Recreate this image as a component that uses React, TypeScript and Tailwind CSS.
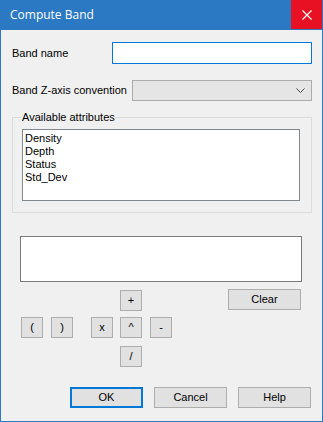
import type { ReactNode } from 'react'

function Btn({
  children,
  className = '',
  primary = false,
}: {
  children: ReactNode
  className?: string
  primary?: boolean
}) {
  return (
    <button
      type="button"
      className={`flex items-center justify-center bg-[#e1e1e1] text-[11px] leading-none text-black ${
        primary ? 'border-2 border-[#0078d7]' : 'border border-[#adadad]'
      } ${className}`}
    >
      {children}
    </button>
  )
}

function OpBtn({ children }: { children: ReactNode }) {
  return <Btn className="h-[21px] w-[22px] pb-[1px]">{children}</Btn>
}

export default function App() {
  const attrs = ['Density', 'Depth', 'Status', 'Std_Dev']

  return (
    <div className="flex h-[422px] w-[323px] flex-col bg-[#2b79c2] px-px pb-px font-['Liberation_Sans',Arial,sans-serif] text-[11px] text-black">
      {/* title bar */}
      <div className="-mx-px flex h-[30px] shrink-0 items-start justify-between">
        <span className="pl-[10px] pt-[7px] font-['Open_Sans',sans-serif] text-[12px] leading-[16px] text-white">
          Compute Band
        </span>
        <div className="mr-px flex h-[29px] w-[31px] items-center justify-center bg-[#e81123]">
          <svg width="10" height="10" viewBox="0 0 10 10">
            <path d="M0.5 0.5 L9.5 9.5 M9.5 0.5 L0.5 9.5" stroke="#fff" strokeWidth="1.2" />
          </svg>
        </div>
      </div>

      {/* body */}
      <div className="flex flex-1 flex-col bg-[#f0f0f0] pl-[11px]">
        <div className="mt-[12px] flex h-[22px] items-center">
          <span className="w-[100px] whitespace-nowrap">Band name</span>
          <input className="h-[22px] w-[200px] border border-[#0078d7] bg-white outline-none" />
        </div>

        <div className="mt-[16px] flex h-[21px] items-center">
          <span className="w-[120px] whitespace-nowrap">Band Z-axis convention</span>
          <div className="flex h-[21px] w-[180px] items-center justify-end border border-[#acacac] bg-[#e5e5e5] pr-[6px]">
            <svg width="9" height="5" viewBox="0 0 9 5">
              <path d="M0.5 0.5 L4.5 4.5 L8.5 0.5" stroke="#444" strokeWidth="1" fill="none" />
            </svg>
          </div>
        </div>

        {/* group box */}
        <div className="relative mt-[16px] h-[96px] w-[300px] border border-[#dcdcdc]">
          <span className="absolute left-[8px] top-[-8px] whitespace-nowrap bg-[#f0f0f0] px-px leading-[14px]">
            Available attributes
          </span>
          <div className="ml-[9px] mt-[11px] h-[72px] w-[278px] border border-[#828790] bg-white pl-[2px] pt-[2px]">
            {attrs.map((a) => (
              <div key={a} className="leading-[13px]">
                {a}
              </div>
            ))}
          </div>
        </div>

        {/* expression box */}
        <div className="ml-[8px] mt-[23px] h-[46px] w-[282px] border border-[#7a7a7a] bg-white" />

        {/* operators */}
        <div className="mt-[7px] flex h-[22px] items-start">
          <div className="ml-[108px] mt-px">
            <OpBtn>+</OpBtn>
          </div>
          <Btn className="ml-[86px] h-[21px] w-[73px]">Clear</Btn>
        </div>
        <div className="mt-[6px] flex h-[21px] items-start">
          <div className="ml-[9px] flex gap-[8px]">
            <OpBtn>(</OpBtn>
            <OpBtn>)</OpBtn>
          </div>
          <div className="ml-[18px] flex gap-[7px]">
            <OpBtn>x</OpBtn>
            <OpBtn>^</OpBtn>
            <div className="ml-px">
              <OpBtn>-</OpBtn>
            </div>
          </div>
        </div>
        <div className="ml-[108px] mt-[8px]">
          <OpBtn>/</OpBtn>
        </div>

        {/* dialog buttons */}
        <div className="mt-[20px] flex gap-[11px] pl-[58px]">
          <Btn primary className="h-[21px] w-[73px]">
            OK
          </Btn>
          <Btn className="h-[21px] w-[73px]">Cancel</Btn>
          <Btn className="h-[21px] w-[73px]">Help</Btn>
        </div>
      </div>
    </div>
  )
}
